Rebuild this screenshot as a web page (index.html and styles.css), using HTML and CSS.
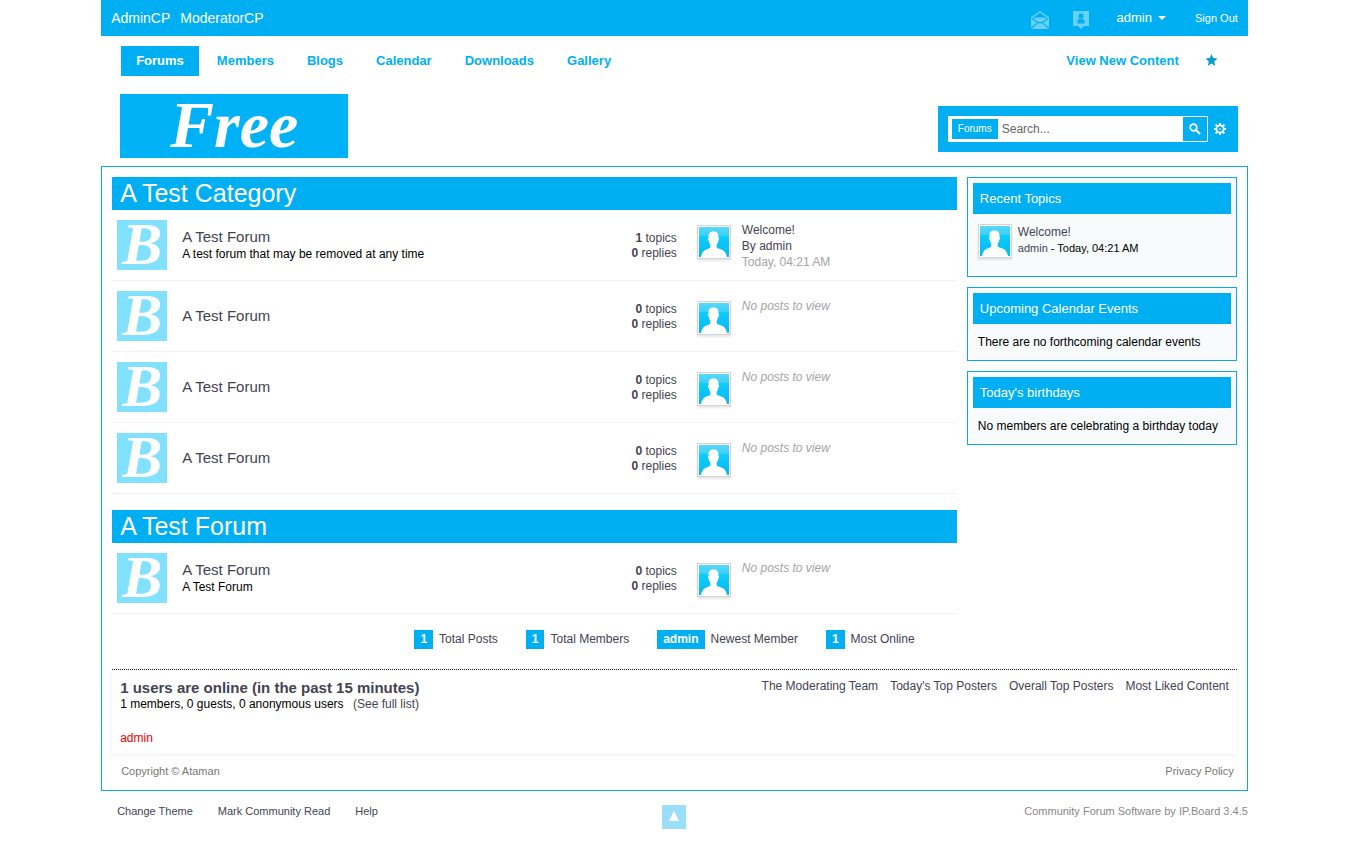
FILE: index.html
```html
<!DOCTYPE html>
<html lang="en">
<head>
<meta charset="utf-8">
<title>Forums</title>
<link rel="stylesheet" href="styles.css">
</head>
<body>
<svg class="defs" aria-hidden="true">
  <defs>
    <linearGradient id="sky" x1="0" y1="0" x2="0" y2="1">
      <stop offset="0" stop-color="#57d8fa"/>
      <stop offset=".28" stop-color="#3fd0f7"/>
      <stop offset=".3" stop-color="#0fcdf9"/>
      <stop offset="1" stop-color="#00b9f5"/>
    </linearGradient>
    <symbol id="person" viewBox="0 0 30 30">
      <rect width="30" height="30" fill="url(#sky)"/>
      <path fill="#fff" d="M14.500 4.500c3.500 0 5 2 5 5v1.500c.8 0 .6 2.200-.3 3-.2 1.500-.7 2.500-1.500 3.500v3c1.300 1.200 3.500 1.500 5.800 2.500 2.500 1.200 3.700 3.500 4.500 7H2c.5-3.500 2-5.800 4.300-7 2.200-1 4.200-1.300 5-2.500v-3c-.8-1-1.300-2-1.500-3.500-.9-.8-1.100-3-.3-3V9.500c0-3 1.500-5 5-5z"/>
    </symbol>
  </defs>
</svg>
<div class="page">
  <header>
    <div class="topbar">
      <nav class="topbar-group" aria-label="Control panels">
        <a href="#">AdminCP</a>
        <a href="#">ModeratorCP</a>
      </nav>
      <div class="user-group">
        <a href="#" class="tool" aria-label="Messages"><svg width="18" height="18" viewBox="0 0 18 18"><path fill="none" stroke="#66d0f7" stroke-width="1.400" d="M.7 8V6.500L9 .9l8.300 5.600V8"/><path fill="#66d0f7" d="M2.500 6.500h13v1.200L11 11H7L2.500 7.700zM0 7.500l6 4.300-6 5zM18 7.500l-6 4.300 6 5zM6.800 12.300h4.400l6.300 5.700H.5z"/></svg></a>
        <a href="#" class="tool" aria-label="Notifications"><svg width="16" height="18" viewBox="0 0 16 18"><path fill="#66d0f7" d="M0 0h16v15h-5l-3 3-3-3H0z"/><circle cx="8" cy="5" r="2.600" fill="#00aff2"/><path fill="#00aff2" d="M4.500 12.500V10c0-1.500 1-2 2-2h3c1 0 2 .5 2 2v2.500z"/></svg></a>
        <button type="button" class="user-menu">admin<svg width="8" height="4" viewBox="0 0 8 4"><path fill="#fff" d="M0 0h8L4 4z"/></svg></button>
        <a href="#" class="sign-out">Sign Out</a>
      </div>
    </div>
    <div class="nav-row">
      <nav class="tabs" aria-label="Main">
        <a href="#" class="tab tab-active">Forums</a>
        <a href="#" class="tab">Members</a>
        <a href="#" class="tab">Blogs</a>
        <a href="#" class="tab">Calendar</a>
        <a href="#" class="tab">Downloads</a>
        <a href="#" class="tab">Gallery</a>
      </nav>
      <div class="quick">
        <a href="#">View New Content</a>
        <a href="#" class="star" aria-label="Quick navigation"><svg width="13" height="12" viewBox="0 0 12 12"><path fill="#0b9bcf" d="M6 0l1.800 4 4.200.4-3.300 3L9.800 12 6 9.500 2.200 12l1.100-4.600L0 4.400 4.200 4z"/></svg></a>
      </div>
    </div>
    <div class="brand-row">
      <a href="#" class="logo">Free</a>
      <form class="search">
        <div class="search-field">
          <button type="button" class="scope">Forums</button>
          <input type="text" placeholder="Search..." aria-label="Search">
          <button type="submit" class="go" aria-label="Search"><svg width="12" height="12" viewBox="0 0 12 12"><circle cx="4.500" cy="4.500" r="3.300" fill="none" stroke="#fff" stroke-width="1.700"/><path stroke="#fff" stroke-width="2.200" d="M7 7l4 4"/></svg></button>
        </div>
        <a href="#" class="gear" aria-label="Advanced search"><svg width="12" height="12" viewBox="0 0 12 12"><circle cx="6" cy="6" r="3.600" fill="none" stroke="#fff" stroke-width="1.800"/><circle cx="6" cy="6" r=".8" fill="#fff"/><path stroke="#fff" stroke-width="2" d="M6 0v2M6 10v2M0 6h2M10 6h2M1.600 1.600l1.500 1.500M8.900 8.900l1.500 1.500M1.600 10.400l1.500-1.500M8.900 3.100l1.500-1.500"/></svg></a>
      </form>
    </div>
  </header>

  <main class="board">
    <div class="columns">
      <div class="categories">
        <section class="category">
          <h2>A Test Category</h2>
          <table class="forums">
            <tr>
              <td class="icon-cell"><span class="forum-icon" aria-hidden="true">B</span></td>
              <td><a href="#" class="forum-name">A Test Forum</a><p class="forum-desc">A test forum that may be removed at any time</p></td>
              <td class="stats"><b>1</b> topics<br><b>0</b> replies</td>
              <td class="last last-filled"><div class="last-post"><svg class="avatar"><use href="#person"/></svg><div><a href="#">Welcome!</a><br>By <a href="#">admin</a><br><span class="muted">Today, 04:21 AM</span></div></div></td>
            </tr>
            <tr>
              <td class="icon-cell"><span class="forum-icon" aria-hidden="true">B</span></td>
              <td><a href="#" class="forum-name">A Test Forum</a></td>
              <td class="stats"><b>0</b> topics<br><b>0</b> replies</td>
              <td class="last"><div class="last-post"><svg class="avatar"><use href="#person"/></svg><em class="muted">No posts to view</em></div></td>
            </tr>
            <tr>
              <td class="icon-cell"><span class="forum-icon" aria-hidden="true">B</span></td>
              <td><a href="#" class="forum-name">A Test Forum</a></td>
              <td class="stats"><b>0</b> topics<br><b>0</b> replies</td>
              <td class="last"><div class="last-post"><svg class="avatar"><use href="#person"/></svg><em class="muted">No posts to view</em></div></td>
            </tr>
            <tr>
              <td class="icon-cell"><span class="forum-icon" aria-hidden="true">B</span></td>
              <td><a href="#" class="forum-name">A Test Forum</a></td>
              <td class="stats"><b>0</b> topics<br><b>0</b> replies</td>
              <td class="last"><div class="last-post"><svg class="avatar"><use href="#person"/></svg><em class="muted">No posts to view</em></div></td>
            </tr>
          </table>
        </section>
        <section class="category">
          <h2>A Test Forum</h2>
          <table class="forums">
            <tr>
              <td class="icon-cell"><span class="forum-icon" aria-hidden="true">B</span></td>
              <td><a href="#" class="forum-name">A Test Forum</a><p class="forum-desc">A Test Forum</p></td>
              <td class="stats"><b>0</b> topics<br><b>0</b> replies</td>
              <td class="last"><div class="last-post"><svg class="avatar"><use href="#person"/></svg><em class="muted">No posts to view</em></div></td>
            </tr>
          </table>
        </section>
      </div>
      <aside class="sidebar">
        <section class="widget">
          <h3>Recent Topics</h3>
          <div class="recent"><svg class="avatar"><use href="#person"/></svg><div><a href="#">Welcome!</a><p><a href="#">admin</a> - Today, 04:21 AM</p></div></div>
        </section>
        <section class="widget">
          <h3>Upcoming Calendar Events</h3>
          <p class="widget-text">There are no forthcoming calendar events</p>
        </section>
        <section class="widget">
          <h3>Today's birthdays</h3>
          <p class="widget-text">No members are celebrating a birthday today</p>
        </section>
      </aside>
    </div>

    <ul class="totals">
      <li><b>1</b>Total Posts</li>
      <li><b>1</b>Total Members</li>
      <li><b>admin</b>Newest Member</li>
      <li><b>1</b>Most Online</li>
    </ul>

    <section class="online">
      <div>
        <h4>1 users are online (in the past 15 minutes)</h4>
        <p>1 members, 0 guests, 0 anonymous users <a href="#" class="full-list">(See full list)</a></p>
        <p class="names"><a href="#">admin</a></p>
      </div>
      <nav class="online-links" aria-label="Statistics">
        <a href="#">The Moderating Team</a>
        <a href="#">Today's Top Posters</a>
        <a href="#">Overall Top Posters</a>
        <a href="#">Most Liked Content</a>
      </nav>
    </section>
    <div class="legal"><span>Copyright © Ataman</span><a href="#">Privacy Policy</a></div>
  </main>

  <footer class="footer">
    <nav class="footer-links" aria-label="Footer">
      <a href="#">Change Theme</a>
      <a href="#">Mark Community Read</a>
      <a href="#">Help</a>
    </nav>
    <a href="#" class="to-top" aria-label="Back to top"><svg width="10" height="10" viewBox="0 0 10 10"><path fill="#fff" d="M5 0l5 10H0z"/></svg></a>
    <span class="software">Community Forum Software by IP.Board 3.4.5</span>
  </footer>
</div>
</body>
</html>
```
FILE: styles.css
```css
* { box-sizing: border-box; }
body {
  margin: 0;
  background: #fff;
  color: #000;
  font: 12px/16px "Liberation Sans", Arial, sans-serif;
}
a { color: #434353; text-decoration: none; }
h2, h3, h4, p, ul { margin: 0; padding: 0; font-weight: normal; }
button, input { margin: 0; padding: 0; border: 0; font: inherit; }
button { cursor: pointer; }
svg { display: block; flex: none; }
.defs { position: absolute; width: 0; height: 0; }
.page { width: 85%; margin: 0 auto; }

.topbar {
  display: flex;
  justify-content: space-between;
  align-items: center;
  height: 36px;
  padding: 0 10px;
  background: #00aff2;
}
.topbar a { color: #fff; }
.topbar-group { display: flex; gap: 10px; font-size: 14px; }
.user-group { display: flex; align-items: center; }
.tool { margin-right: 24px; padding-top: 3px; }
.tool + .user-menu { margin-left: 4px; }
.user-menu {
  display: flex;
  align-items: center;
  gap: 6px;
  background: none;
  color: #fff;
  font-size: 13px;
}
.sign-out { margin-left: 29px; font-size: 11px; }

.nav-row {
  display: flex;
  justify-content: space-between;
  padding: 10px 30px 18px 20px;
  font-size: 13px;
  font-weight: bold;
  line-height: 30px;
}
.nav-row a { color: #00aff2; }
.tabs { display: flex; gap: 3px; }
.tab { padding: 0 15px; }
.nav-row .tab-active { background: #00aff2; color: #fff; }
.quick { display: flex; gap: 26px; }
.star { padding-top: 8px; }

.brand-row {
  display: flex;
  justify-content: space-between;
  align-items: center;
  padding: 0 10px 8px 19px;
}
.logo {
  width: 228px;
  height: 64px;
  background: #00b1f5;
  color: #fff;
  font: italic bold 66px/62px "Liberation Serif", serif;
  text-align: center;
}
.search {
  display: flex;
  align-items: center;
  gap: 6px;
  width: 300px;
  margin-top: 6px;
  padding: 10px;
  background: #00aff2;
}
.search-field {
  display: flex;
  align-items: center;
  flex: none;
  width: 260px;
  height: 26px;
  padding: 1px 1px 1px 4px;
  background: #fff;
}
.scope {
  height: 20px;
  padding: 0 6px;
  background: #00aff2;
  color: #fff;
  font-size: 10px;
}
.search input {
  flex: 1;
  min-width: 0;
  padding-left: 4px;
  outline: 0;
  color: #434353;
}
.search input::placeholder { color: #666; }
.go {
  display: flex;
  align-items: center;
  justify-content: center;
  width: 24px;
  height: 24px;
  background: #00aff2;
}

.board { padding: 10px 10px 0; border: 1px solid #0aaae8; }
.columns { display: flex; gap: 10px; align-items: flex-start; }
.categories { flex: 1; display: grid; gap: 16px; }
.category h2 {
  padding-left: 8px;
  background: #00aff2;
  color: #fff;
  font-size: 25px;
  line-height: 33px;
}
.forums {
  width: 100%;
  border-collapse: separate;
  border-spacing: 0;
  table-layout: fixed;
  color: #434353;
}
.forums td {
  height: 71px;
  padding: 0;
  border-bottom: 1px solid #f2f2f2;
}
.forums .icon-cell { width: 70px; padding-left: 5px; }
.forum-icon {
  display: block;
  width: 50px;
  height: 50px;
  background: #82e1fe;
  color: #fff;
  font: italic bold 60px/48px "Liberation Serif", serif;
  text-align: center;
}
.forum-name { display: block; font-size: 15px; line-height: 18px; }
.forum-desc { color: #000; }
.forums .stats { width: 130px; padding-top: 2px; line-height: 15px; text-align: right; }
.forums .last { width: 280px; padding: 20px 0 0 20px; vertical-align: top; }
.forums .last-filled { padding-top: 15px; }
.last-post { display: flex; align-items: flex-start; gap: 11px; }
.last-post > :last-child { margin-top: -3px; }
.muted { color: #a4a4a4; }
.avatar {
  width: 34px;
  height: 34px;
  padding: 1px;
  border: 1px solid #d5d5d5;
  background: #fff;
  box-shadow: 0 2px 2px rgba(0, 0, 0, .1);
}

.sidebar { display: grid; gap: 10px; width: 270px; }
.widget { padding: 5px; border: 1px solid #0aaae8; background: #f7fbfc; }
.widget h3 {
  padding-left: 7px;
  background: #00aff2;
  color: #fff;
  font-size: 13px;
  line-height: 31px;
}
.widget-text { padding: 10px 5px 5px; }
.recent { display: flex; gap: 6px; padding: 10px 5px 13px; }
.recent p { font-size: 11px; }

.totals {
  display: flex;
  justify-content: center;
  gap: 28px;
  padding: 16px 20px 20px 0;
  list-style: none;
  color: #434353;
  line-height: 19px;
}
.totals li { display: flex; gap: 6px; }
.totals b { padding: 0 6px; background: #00aff2; color: #fff; }

.online {
  display: flex;
  justify-content: space-between;
  padding: 10px 8px 8px;
  border-top: 1px dotted #222;
  box-shadow: 0 1px 3px rgba(0, 0, 0, .08);
}
.online h4 { color: #434353; font-size: 15px; font-weight: bold; }
.full-list { margin-left: 6px; }
.names { padding-top: 18px; }
.names a { color: #f00000; }
.online-links { display: flex; gap: 12px; margin-top: -2px; }
.legal {
  display: flex;
  justify-content: space-between;
  padding: 9px 3px 11px 9px;
  color: #777;
  font-size: 11px;
}
.legal a { color: #777; }

.footer {
  display: grid;
  grid-template-columns: 1fr auto 1fr;
  align-items: start;
  padding: 12px 0 20px;
  font-size: 11px;
}
.footer-links { display: flex; gap: 25px; padding-left: 16px; }
.to-top {
  display: flex;
  justify-content: center;
  width: 24px;
  height: 24px;
  margin-top: 2px;
  padding-top: 6px;
  background: #99dff9;
}
.software { color: #888; text-align: right; }
```
